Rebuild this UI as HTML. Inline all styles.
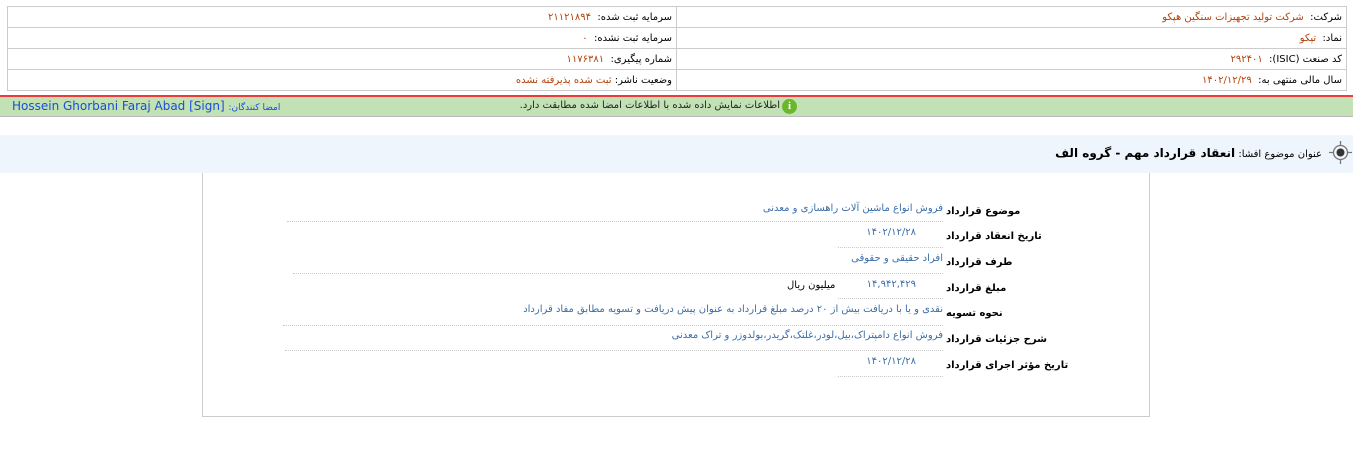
<!DOCTYPE html>
<html><head><meta charset="utf-8"><style>
*{margin:0;padding:0;box-sizing:border-box}
body{width:1353px;height:471px;background:#fff;position:relative;overflow:hidden;font-family:"DejaVu Sans","Liberation Sans",sans-serif;font-size:10px;color:#000}
.a{position:absolute;white-space:nowrap}
table.t{position:absolute;left:7px;top:6px;width:1340px;border-collapse:collapse}
table.t td{border:1px solid #ccc;height:21px;padding:0 4px;direction:rtl;text-align:right;font-size:10px}
.o{color:#b5420a}
.lbl{position:absolute;left:946px;font-weight:bold;font-size:10px;direction:rtl;white-space:nowrap;letter-spacing:-0.3px}
.val{position:absolute;right:410px;color:#3a6ea8;font-size:10px;direction:rtl;white-space:nowrap}
.dot{position:absolute;border-top:1px dotted #c8c8c8;height:0}
</style></head><body>
<table class="t"><tr><td style="width:669px">سرمایه ثبت شده:&nbsp; <span class="o">۲۱۱۲۱۸۹۴</span></td><td>شرکت:&nbsp; <span class="o">شرکت تولید تجهیزات سنگین هپکو</span></td></tr>
<tr><td>سرمایه ثبت نشده:&nbsp; <span class="o">۰</span></td><td>نماد:&nbsp; <span class="o">تپکو</span></td></tr>
<tr><td>شماره پیگیری:&nbsp; <span class="o">۱۱۷۶۳۸۱</span></td><td>کد صنعت (ISIC):&nbsp; <span class="o">۲۹۲۴۰۱</span></td></tr>
<tr><td>وضعیت ناشر: <span class="o">ثبت شده پذیرفته نشده</span></td><td>سال مالی منتهی به:&nbsp; <span class="o">۱۴۰۲/۱۲/۲۹</span></td></tr></table>
<div class="a" style="left:0;top:95px;width:1353px;height:2px;background:#ee3a3a"></div>
<div class="a" style="left:0;top:97px;width:1353px;height:20px;background:#c2e1b5;border-bottom:1px solid #bbb"></div>
<div class="a" style="left:12px;top:99px;font-family:'DejaVu Sans',sans-serif;font-size:12px;color:#1a4fd6">Hossein Ghorbani Faraj Abad [Sign] <span style="font-size:9px;direction:rtl">:امضا کنندگان</span></div>
<div class="a" style="right:573px;top:100px;font-size:10px;color:#222;direction:rtl;letter-spacing:-0.3px">اطلاعات نمایش داده شده با اطلاعات امضا شده مطابقت دارد.</div>
<div class="a" style="left:782px;top:99px;width:15px;height:15px;border-radius:50%;background:#6ab82a;color:#fff;font-weight:bold;font-size:11px;text-align:center;line-height:15px;font-family:'Liberation Serif',serif">i</div>
<div class="a" style="left:0;top:135px;width:1353px;height:38px;background:#eef5fc"></div>
<svg class="a" style="left:1328px;top:140px" width="25" height="25" viewBox="0 0 25 25"><circle cx="12.5" cy="12.5" r="7" fill="none" stroke="#777" stroke-width="1.3"/><circle cx="12.5" cy="12.5" r="4" fill="#333"/><path d="M12.5 1v4M12.5 20v4M1 12.5h4M20 12.5h4" stroke="#777" stroke-width="1.3"/></svg>
<div class="a" style="right:31px;top:146px;direction:rtl;font-size:10px">عنوان موضوع افشا: <b style="font-size:12px;letter-spacing:-0.3px">انعقاد قرارداد مهم - گروه الف</b></div>
<div class="a" style="left:202px;top:173px;width:948px;height:244px;border:1px solid #ccc;border-top:none"></div>
<div class="lbl" style="top:206px">موضوع قرارداد</div>
<div class="val" style="top:203px">فروش انواع ماشین آلات راهسازی و معدنی</div>
<div class="dot" style="left:287px;top:221px;width:656px"></div>
<div class="lbl" style="top:231px">تاریخ انعقاد قرارداد</div>
<div class="val" style="top:227px;right:437px">۱۴۰۲/۱۲/۲۸</div>
<div class="dot" style="left:838px;top:247px;width:105px"></div>
<div class="lbl" style="top:257px">طرف قرارداد</div>
<div class="val" style="top:253px">افراد حقیقی و حقوقی</div>
<div class="dot" style="left:293px;top:273px;width:650px"></div>
<div class="lbl" style="top:283px">مبلغ قرارداد</div>
<div class="val" style="top:279px;right:437px">۱۴,۹۴۲,۴۲۹</div>
<div class="a" style="left:787px;top:280px;font-size:10px;direction:rtl">میلیون ریال</div>
<div class="dot" style="left:838px;top:298px;width:105px"></div>
<div class="lbl" style="top:308px">نحوه تسویه</div>
<div class="val" style="top:304px">نقدی و یا با دریافت بیش از ۲۰ درصد مبلغ قرارداد به عنوان پیش دریافت و تسویه مطابق مفاد قرارداد</div>
<div class="dot" style="left:283px;top:325px;width:660px"></div>
<div class="lbl" style="top:334px">شرح جزئیات قرارداد</div>
<div class="val" style="top:330px">فروش انواع دامپتراک،بیل،لودر،غلتک،گریدر،بولدوزر و تراک معدنی</div>
<div class="dot" style="left:285px;top:350px;width:658px"></div>
<div class="lbl" style="top:360px">تاریخ مؤثر اجرای قرارداد</div>
<div class="val" style="top:356px;right:437px">۱۴۰۲/۱۲/۲۸</div>
<div class="dot" style="left:838px;top:376px;width:105px"></div>
</body></html>
